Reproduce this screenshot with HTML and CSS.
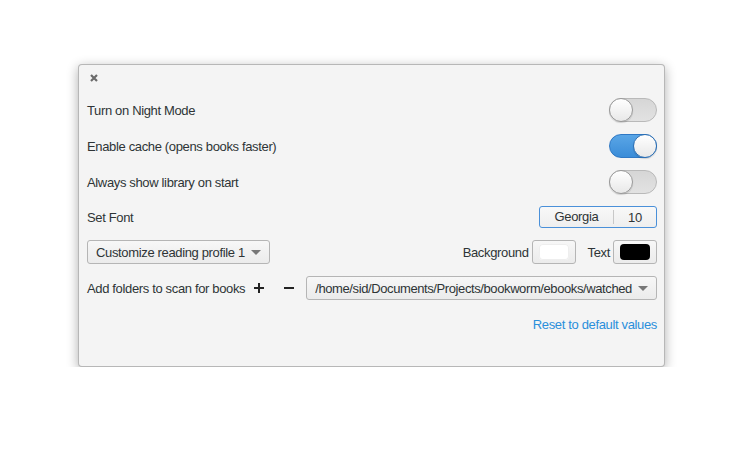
FILE: index.html
```html
<!DOCTYPE html>
<html>
<head>
<meta charset="utf-8">
<link rel="stylesheet" href="styles.css">
</head>
<body>
<div class="dialog">
  <div class="header">
    <svg class="close" width="8" height="8" viewBox="0 0 8 8"><path d="M1 1L7 7M7 1L1 7" stroke="#6b6b6b" stroke-width="2.2" stroke-linecap="butt"/></svg>
  </div>
  <div class="rows">
    <div class="row">
      <span class="label">Turn on Night Mode</span>
      <span class="switch"><span class="knob"></span></span>
    </div>
    <div class="row">
      <span class="label">Enable cache (opens books faster)</span>
      <span class="switch on"><span class="knob"></span></span>
    </div>
    <div class="row">
      <span class="label">Always show library on start</span>
      <span class="switch"><span class="knob"></span></span>
    </div>
    <div class="row font-row">
      <span class="label">Set Font</span>
      <span class="fontbtn"><span class="fname">Georgia</span><span class="fsize">10</span></span>
    </div>
    <div class="row">
      <span class="btn combo-btn">Customize reading profile 1<span class="arrow"></span></span>
      <span class="colors">
        <span class="label">Background</span>
        <span class="btn swatch-btn"><span class="swatch white"></span></span>
        <span class="label text-label">Text</span>
        <span class="btn swatch-btn"><span class="swatch black"></span></span>
      </span>
    </div>
    <div class="row">
      <span class="label">Add folders to scan for books</span>
      <span class="icon-btn plus">
        <svg width="12" height="12" viewBox="0 0 12 12"><path d="M6 1V11M1 6H11" stroke="#222" stroke-width="2"/></svg>
      </span>
      <span class="icon-btn minus">
        <svg width="12" height="12" viewBox="0 0 12 12"><path d="M1 6H11" stroke="#222" stroke-width="2"/></svg>
      </span>
      <span class="btn path-btn"><span class="path">/home/sid/Documents/Projects/bookworm/ebooks/watched</span><span class="arrow"></span></span>
    </div>
    <div class="row reset-row">
      <span class="link">Reset to default values</span>
    </div>
  </div>
</div>
</body>
</html>
```
FILE: styles.css
```css
html, body {
  margin: 0;
  padding: 0;
  background: #ffffff;
}
body {
  font-family: "Liberation Sans", Arial, sans-serif;
  font-size: 13px;
  letter-spacing: -0.35px;
  color: #2e3436;
}
.dialog {
  margin: 64px 0 0 78px;
  width: 585px;
  height: 301px;
  background: #f4f4f4;
  border: 1px solid rgba(0,0,0,0.25);
  border-radius: 4px;
  box-shadow: 0 3px 12px rgba(0,0,0,0.32);
  box-sizing: content-box;
}
.header {
  height: 33px;
  box-sizing: border-box;
  padding: 9px 0 0 11px;
}
.close {
  display: block;
}
.rows {
  display: flex;
  flex-direction: column;
  gap: 12px;
  padding: 0 7px 0 8px;
}
.row {
  display: flex;
  align-items: center;
  justify-content: space-between;
  height: 24px;
}
.font-row {
  height: 22px;
}
.label {
  white-space: nowrap;
}
.switch {
  position: relative;
  width: 48px;
  height: 24px;
  box-sizing: border-box;
  border: 1px solid #b9b9b9;
  border-radius: 12px;
  background: linear-gradient(#d6d6d6, #e2e2e2);
}
.switch .knob {
  position: absolute;
  top: -1px;
  left: -1px;
  width: 24px;
  height: 24px;
  box-sizing: border-box;
  border-radius: 50%;
  border: 1px solid #9a9a9a;
  background: linear-gradient(#ffffff, #e8e8e8);
  box-shadow: 0 1px 1px rgba(0,0,0,0.15);
}
.switch.on {
  border-color: #2f78c4;
  background: linear-gradient(#5aa6e6, #3a8cd8);
}
.switch.on .knob {
  left: auto;
  right: -1px;
  border-color: #2d6fb3;
}
.fontbtn {
  display: flex;
  align-items: center;
  width: 118px;
  height: 22px;
  box-sizing: border-box;
  border: 1px solid #4a90d9;
  border-radius: 3px;
  background: linear-gradient(#f8f8f8, #eeeeee);
  color: #2e3436;
}
.fname {
  flex: 0 0 73px;
  text-align: center;
  border-right: 1px solid #c8c8c8;
  line-height: 14px;
}
.fsize {
  flex: 1;
  text-align: center;
}
.btn {
  display: flex;
  align-items: center;
  height: 24px;
  box-sizing: border-box;
  border: 1px solid #b5b5b5;
  border-radius: 3px;
  background: linear-gradient(#f7f7f7, #ebebeb);
  white-space: nowrap;
}
.combo-btn {
  padding: 0 9px 0 8px;
  width: 183px;
  justify-content: space-between;
}
.arrow {
  display: inline-block;
  flex: none;
  width: 0;
  height: 0;
  border-left: 5px solid transparent;
  border-right: 5px solid transparent;
  border-top: 5px solid #777;
  margin-left: 6px;
}
.colors {
  display: flex;
  align-items: center;
}
.swatch-btn {
  width: 44px;
  justify-content: center;
  margin-left: 3px;
}
.swatch {
  display: block;
  width: 30px;
  height: 16px;
  border-radius: 4px;
}
.swatch.white {
  background: #ffffff;
  box-shadow: inset 0 0 0 1px #eeeeee;
}
.swatch.black {
  background: #000000;
}
.text-label {
  margin-left: 12px;
}
.icon-btn {
  display: flex;
  align-items: center;
  justify-content: center;
  width: 24px;
  height: 24px;
  flex: none;
}
.plus {
  margin-left: 2px;
}
.minus {
  margin-left: 6px;
}
.path-btn {
  flex: 1;
  min-width: 0;
  margin-left: 5px;
  padding: 0 8px 0 8px;
  justify-content: space-between;
}
.path {
  overflow: hidden;
  letter-spacing: -0.4px;
}
.path-btn .arrow {
  margin-left: 4px;
}
.reset-row {
  justify-content: flex-end;
}
.link {
  color: #2a8fdb;
}
```
